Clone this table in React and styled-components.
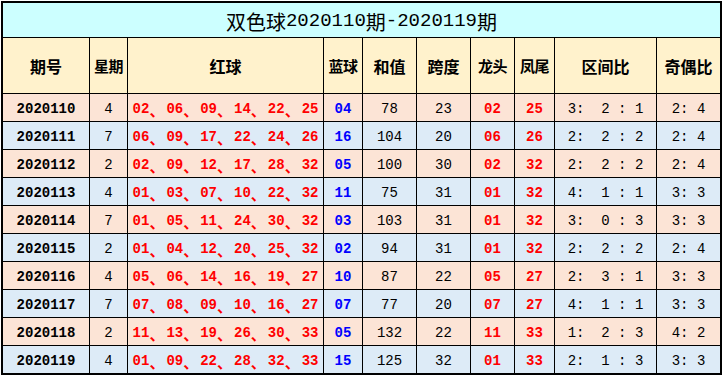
import React from "react";
import styled, { createGlobalStyle } from "styled-components";

const Global = createGlobalStyle`
  html, body { margin: 0; padding: 0; background: #ffffff; }
  body { font-family: "Liberation Mono", "Noto Sans CJK SC", monospace; }
`;

const Page = styled.div`
  padding: 1px 0 0 1px;
`;

const Grid = styled.div`
  display: grid;
  width: 717px;
  grid-template-columns: 86px 37px 195px 38px 53px 53px 43px 39px 101px 63px;
  grid-template-rows: 34px 55px repeat(10, 27px);
  gap: 1px;
  background: #000000;
  border: 2px solid #000000;
`;

const Title = styled.div`
  grid-column: 1 / -1;
  background: #ccffff;
  display: flex;
  align-items: center;
  justify-content: center;
  font-size: 19px;
  color: #000;
  padding-top: 2px;
`;

const Cjk = styled.span`
  font-family: "Noto Sans CJK SC", sans-serif;
  font-size: 20px;
`;

const Head = styled.div`
  background: #fff2cc;
  display: flex;
  align-items: center;
  justify-content: center;
  font-family: "Noto Sans CJK SC", sans-serif;
  font-weight: 700;
  font-size: ${(p) => (p.$tight ? "15px" : "16px")};
  letter-spacing: ${(p) => (p.$tight ? "-0.5px" : "0")};
  white-space: nowrap;
  color: #000;
`;

const Cell = styled.div`
  background: ${(p) => (p.$odd ? "#fce4d6" : "#ddebf7")};
  display: flex;
  align-items: center;
  justify-content: center;
  padding-top: 3px;
  box-sizing: border-box;
  font-family: "Liberation Mono", "Noto Sans CJK SC", monospace;
  font-size: 14px;
  white-space: pre;
  color: ${(p) => p.$color || "#000"};
  font-weight: ${(p) => (p.$bold ? 700 : 400)};
`;

const Sep = styled.span`
  display: inline-block;
  width: 17px;
  font-family: "Noto Sans CJK SC", sans-serif;
  font-size: 15px;
  text-align: left;
`;

const rows = [
  ["2020110", "4", ["02", "06", "09", "14", "22", "25"], "04", "78", "23", "02", "25", "3:  2 : 1", "2: 4"],
  ["2020111", "7", ["06", "09", "17", "22", "24", "26"], "16", "104", "20", "06", "26", "2:  2 : 2", "2: 4"],
  ["2020112", "2", ["02", "09", "12", "17", "28", "32"], "05", "100", "30", "02", "32", "2:  2 : 2", "2: 4"],
  ["2020113", "4", ["01", "03", "07", "10", "22", "32"], "11", "75", "31", "01", "32", "4:  1 : 1", "3: 3"],
  ["2020114", "7", ["01", "05", "11", "24", "30", "32"], "03", "103", "31", "01", "32", "3:  0 : 3", "3: 3"],
  ["2020115", "2", ["01", "04", "12", "20", "25", "32"], "02", "94", "31", "01", "32", "2:  2 : 2", "2: 4"],
  ["2020116", "4", ["05", "06", "14", "16", "19", "27"], "10", "87", "22", "05", "27", "2:  3 : 1", "3: 3"],
  ["2020117", "7", ["07", "08", "09", "10", "16", "27"], "07", "77", "20", "07", "27", "4:  1 : 1", "3: 3"],
  ["2020118", "2", ["11", "13", "19", "26", "30", "33"], "05", "132", "22", "11", "33", "1:  2 : 3", "4: 2"],
  ["2020119", "4", ["01", "09", "22", "28", "32", "33"], "15", "125", "32", "01", "33", "2:  1 : 3", "3: 3"],
];

const headers = ["期号", "星期", "红球", "蓝球", "和值", "跨度", "龙头", "凤尾", "区间比", "奇偶比"];

export default function App() {
  return (
    <Page>
      <Global />
      <Grid>
        <Title>
          <Cjk>双色球</Cjk>2020110<Cjk>期</Cjk>-2020119<Cjk>期</Cjk>
        </Title>
        {headers.map((h, i) => (
          <Head key={h} $tight={i === 1 || i === 3 || i === 6 || i === 7}>
            {h}
          </Head>
        ))}
        {rows.map((r, idx) => {
          const odd = idx % 2 === 0;
          return (
            <React.Fragment key={r[0]}>
              <Cell $odd={odd} $bold>{r[0]}</Cell>
              <Cell $odd={odd}>{r[1]}</Cell>
              <Cell $odd={odd} $bold $color="#ff0000">
                {r[2].map((n, i) => (
                  <React.Fragment key={i}>
                    {n}
                    {i < 5 && <Sep>、</Sep>}
                  </React.Fragment>
                ))}
              </Cell>
              <Cell $odd={odd} $bold $color="#0000ff">{r[3]}</Cell>
              <Cell $odd={odd}>{r[4]}</Cell>
              <Cell $odd={odd}>{r[5]}</Cell>
              <Cell $odd={odd} $bold $color="#ff0000">{r[6]}</Cell>
              <Cell $odd={odd} $bold $color="#ff0000">{r[7]}</Cell>
              <Cell $odd={odd}>{r[8]}</Cell>
              <Cell $odd={odd}>{r[9]}</Cell>
            </React.Fragment>
          );
        })}
      </Grid>
    </Page>
  );
}
